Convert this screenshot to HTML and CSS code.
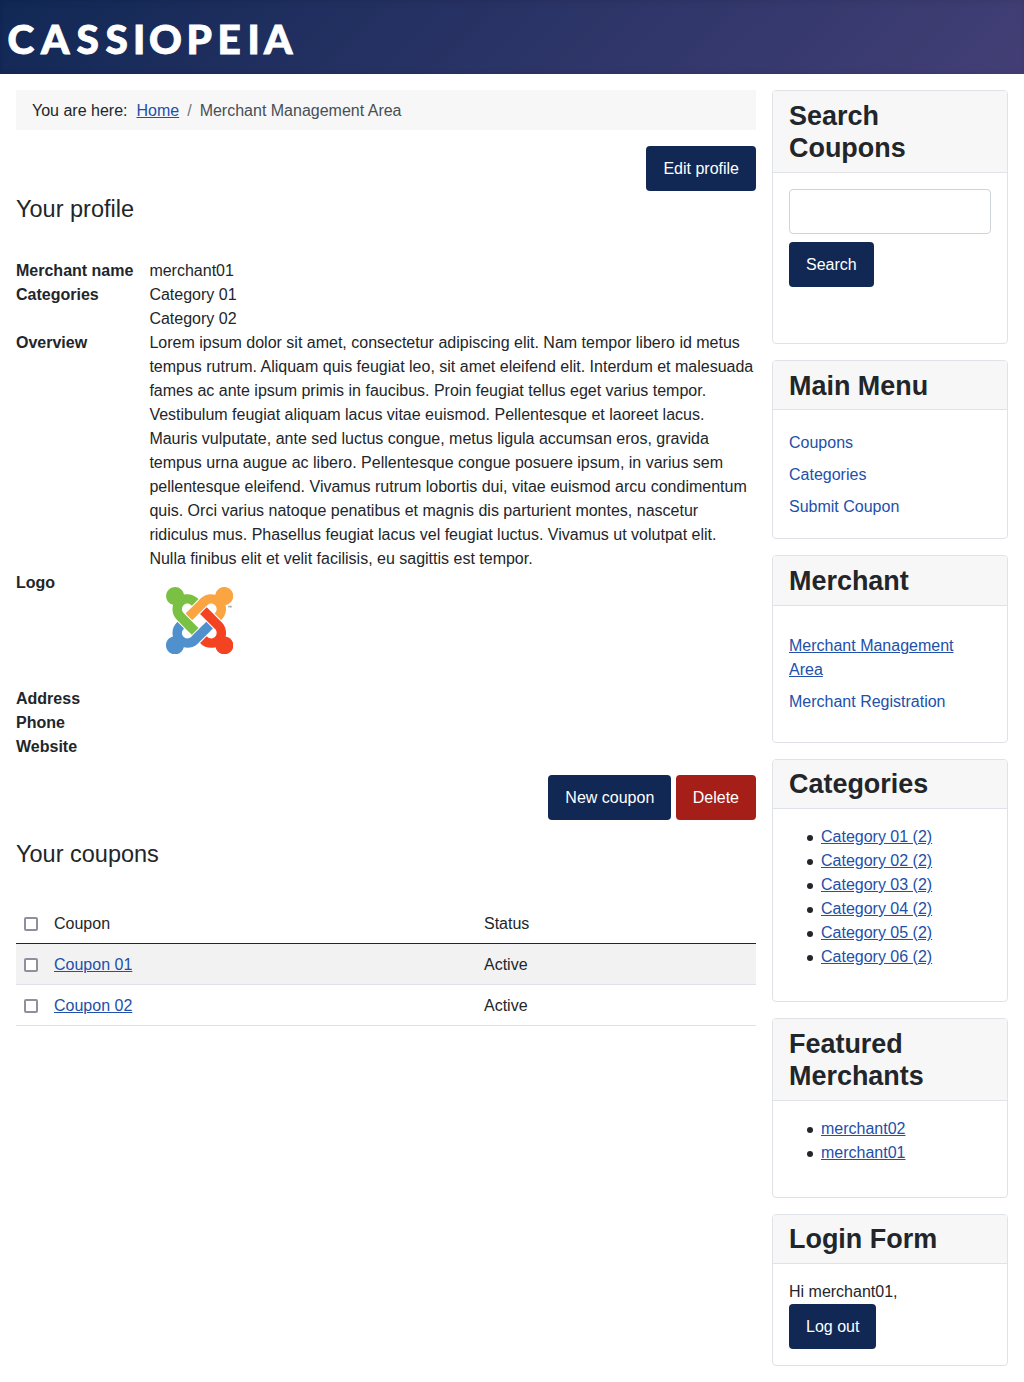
FILE: index.html
```html
<!DOCTYPE html>
<html lang="en">
<head>
<meta charset="utf-8">
<title>Merchant Management Area</title>
<link rel="stylesheet" href="styles.css">
</head>
<body>
<header class="header">
  <svg class="brand" width="300" height="74" viewBox="0 0 300 74" role="img" aria-label="Cassiopeia">
    <text class="brand-text" y="53.5" x="7.5 41 76.5 105.5 133 149 186.5 217.5 247.5 264">CASSIOPEIA</text>
  </svg>
</header>
<div class="site">
  <main class="main">
    <nav class="breadcrumb"><span>You are here:</span><a class="crumb-home" href="#">Home</a><span class="crumb-sep">/</span><span class="crumb-current">Merchant Management Area</span></nav>
    <div class="actions"><a class="btn">Edit profile</a></div>
    <h2 class="title">Your profile</h2>
    <dl class="profile">
      <dt>Merchant name</dt><dd>merchant01</dd>
      <dt>Categories</dt><dd>Category 01<br>Category 02</dd>
      <dt>Overview</dt><dd>Lorem ipsum dolor sit amet, consectetur adipiscing elit. Nam tempor libero id metus tempus rutrum. Aliquam quis feugiat leo, sit amet eleifend elit. Interdum et malesuada fames ac ante ipsum primis in faucibus. Proin feugiat tellus eget varius tempor. Vestibulum feugiat aliquam lacus vitae euismod. Pellentesque et laoreet lacus. Mauris vulputate, ante sed luctus congue, metus ligula accumsan eros, gravida tempus urna augue ac libero. Pellentesque congue posuere ipsum, in varius sem pellentesque eleifend. Vivamus rutrum lobortis dui, vitae euismod arcu condimentum quis. Orci varius natoque penatibus et magnis dis parturient montes, nascetur ridiculus mus. Phasellus feugiat lacus vel feugiat luctus. Vivamus ut volutpat elit. Nulla finibus elit et velit facilisis, eu sagittis est tempor.</dd>
      <dt>Logo</dt>
      <dd class="logo">
        <svg class="logo-mark" viewBox="0 32 448 448">
          <path fill="#7ac143" d="M.6 92.1C.6 58.8 27.4 32 60.4 32c30 0 54.5 21.9 59.2 50.2 32.6-7.6 67.1.6 96.5 30l-44.3 44.3c-20.5-20.5-42.6-16.3-55.4-3.5-14.3 14.3-14.3 37.9 0 52.2l99.5 99.5-44 44.3c-87.7-87.2-49.7-49.7-99.8-99.7-26.8-26.5-35-64.8-24.8-98.9C20.4 144.6.6 120.7.6 92.1z"/>
          <path fill="#faa541" d="M130.1 208.5l44.3 44.3c10-10 89.7-89.7 99.7-99.8 14.3-14.3 37.6-14.3 51.9 0 12.8 12.8 17 35-3.5 55.4l44 44.3c31.2-31.2 38.5-67.6 28.9-101.2 29.2-4.1 51.9-29.2 51.9-59.5 0-33.2-26.8-60.1-59.8-60.1-30.3 0-55.4 22.5-59.5 51.6-33.8-9.9-71.7-1.5-98.3 25.1-18.3 19.1-71.1 71.5-99.6 99.9z"/>
          <path fill="#f44321" d="M396.4 360.7c8.2-32.7-.9-68.5-26.3-93.9-11.8-12.2 5 4.7-99.5-99.7l-44.3 44.3 99.7 99.7c14.3 14.3 14.3 37.6 0 51.9-12.8 12.8-35 17-55.4-3.5l-44 44.3c27.6 30.2 68 38.8 102.7 28 5.5 27.4 29.7 48.1 58.9 48.1 33 0 59.8-26.8 59.8-60.1 0-30.2-22.5-55-51.6-59.1z"/>
          <path fill="#5091cd" d="M312.1 307.6l-44-44.3c-87 86.4-50.4 50.4-99.7 99.8-14.3 14.3-37.6 14.3-51.9 0-13.1-13.4-16.9-35.3 3.2-55.4l-44-44.3c-30.2 30.2-38 65.2-29.5 98.3-26.7 6-46.2 29.9-46.2 58.2C0 453.2 26.8 480 59.8 480c28.6 0 52.5-19.8 58.6-46.7 32.7 8.2 68.5-.6 94.2-26 32.1-32 12.2-12.4 99.5-99.7z"/>
          <path fill="#999" d="M414 157h9v12h-9zM426 157h10v12h-10z"/>
        </svg>
      </dd>
      <dt>Address</dt><dd></dd>
      <dt>Phone</dt><dd></dd>
      <dt>Website</dt><dd></dd>
    </dl>
    <div class="actions actions-coupons"><a class="btn">New coupon</a><a class="btn btn-danger">Delete</a></div>
    <h2 class="title title-coupons">Your coupons</h2>
    <div class="table">
      <div class="row row-head"><span class="check"></span><span>Coupon</span><span>Status</span></div>
      <div class="row row-striped"><span class="check"></span><span><a href="#">Coupon 01</a></span><span>Active</span></div>
      <div class="row"><span class="check"></span><span><a href="#">Coupon 02</a></span><span>Active</span></div>
    </div>
  </main>
  <aside class="sidebar">
    <section class="card card-search">
      <h3 class="card-header">Search Coupons</h3>
      <div class="card-body"><input class="input" type="text" aria-label="Search coupons"><a class="btn">Search</a></div>
    </section>
    <section class="card card-menu">
      <h3 class="card-header">Main Menu</h3>
      <div class="card-body menu"><a href="#">Coupons</a><a href="#">Categories</a><a href="#">Submit Coupon</a></div>
    </section>
    <section class="card card-merchant">
      <h3 class="card-header">Merchant</h3>
      <div class="card-body menu"><a class="active" href="#">Merchant Management Area</a><a href="#">Merchant Registration</a></div>
    </section>
    <section class="card card-categories">
      <h3 class="card-header">Categories</h3>
      <div class="card-body"><ul class="list">
        <li><a href="#">Category 01 (2)</a></li><li><a href="#">Category 02 (2)</a></li><li><a href="#">Category 03 (2)</a></li>
        <li><a href="#">Category 04 (2)</a></li><li><a href="#">Category 05 (2)</a></li><li><a href="#">Category 06 (2)</a></li>
      </ul></div>
    </section>
    <section class="card card-featured">
      <h3 class="card-header">Featured Merchants</h3>
      <div class="card-body"><ul class="list"><li><a href="#">merchant02</a></li><li><a href="#">merchant01</a></li></ul></div>
    </section>
    <section class="card card-login">
      <h3 class="card-header">Login Form</h3>
      <div class="card-body"><span>Hi merchant01,</span><a class="btn">Log out</a></div>
    </section>
  </aside>
</div>
</body>
</html>
```
FILE: styles.css
```css
* { box-sizing: border-box; }
body {
  margin: 0;
  background: #fff;
  color: #22262a;
  font: 16px/24px "Liberation Sans", Arial, sans-serif;
}
a { color: #224faa; }
h2, h3, dl, dd, ul { margin: 0; padding: 0; }

.header {
  height: 74px;
  background: linear-gradient(135deg, #112855 0%, #433f76 100%);
  box-shadow: inset 0 5px 5px rgba(0, 0, 0, .03), inset 0 -2px 4px rgba(0, 0, 0, .08);
}
.brand { display: block; }
.brand-text {
  font: 900 40.5px Lato, sans-serif;
  fill: #fff;
  stroke: #fff;
  stroke-width: .9px;
}

.site {
  display: grid;
  grid-template-columns: 740px 236px;
  gap: 16px;
  padding: 16px;
}

.breadcrumb {
  display: flex;
  height: 40px;
  padding: 9px 16px 7px;
  background: #f7f7f7;
}
.crumb-home { margin-left: 9px; }
.crumb-sep { padding: 0 8px; color: #6d757e; }
.crumb-current { color: #484f56; }

.actions {
  display: flex;
  justify-content: flex-end;
  gap: 4.45px;
  margin-top: 16px;
}
.btn {
  display: inline-block;
  height: 45px;
  padding: 10.5px 17px;
  border-radius: 4px;
  background: #112855;
  color: #fff;
}
.btn-danger { background: #a51f18; }

.title {
  margin-top: 4px;
  font-size: 23.5px;
  font-weight: 400;
  line-height: 28px;
}
.title-coupons { margin-top: 20px; }

.profile {
  display: grid;
  grid-template-columns: max-content 1fr;
  column-gap: 16px;
  margin-top: 36px;
}
.profile dt { font-weight: 700; }
.logo { height: 116px; padding: 16px 16.6px; }
.logo-mark { display: block; width: 67.4px; height: 67.4px; }

.table { margin-top: 35px; }
.row {
  display: grid;
  grid-template-columns: 30px 430px 1fr;
  align-items: center;
  height: 41px;
  padding: 1px 8px 0;
  border-bottom: 1px solid #dfe3e7;
}
.row-head { border-bottom-color: #22262a; }
.row-striped { background: #f2f2f2; }
.check {
  width: 14px;
  height: 14px;
  border: 2px solid #8f8f9d;
  border-radius: 2px;
  background: #fff;
}

.sidebar { display: flex; flex-direction: column; gap: 16px; }
.card {
  border: 1px solid #dfe3e7;
  border-radius: 4px;
  overflow: hidden;
}
.card-search { height: 254px; }
.card-menu { height: 179px; }
.card-merchant { height: 188px; }
.card-categories { height: 243px; }
.card-featured { height: 180px; }
.card-login { height: 152px; }
.card-header {
  padding: 8px 16px;
  border-bottom: 1px solid #dfe3e7;
  background: #f7f7f7;
  font-size: 26.95px;
  line-height: 32px;
}
.card-search .card-header,
.card-merchant .card-header,
.card-featured .card-header { padding-top: 9px; }
.card-menu .card-header { padding: 9px 16px 7px; }
.card-body {
  display: flex;
  flex-direction: column;
  align-items: flex-start;
  padding: 16px;
}
.input {
  width: 100%;
  height: 45px;
  margin-bottom: 8px;
  border: 1px solid #ced4da;
  border-radius: 4px;
  background: #fff;
}
.menu { gap: 8px; padding-top: 21px; }
.card-merchant .menu { padding: 28px 24px 16px 16px; }
.menu a { text-decoration: none; }
.menu .active { text-decoration: underline; }
.list { list-style: none; padding-left: 18px; }
.list li { display: flex; align-items: center; gap: 8px; }
.list li::before {
  content: "";
  width: 6px;
  height: 6px;
  margin-top: 2px;
  border-radius: 50%;
  background: #22262a;
}
```
